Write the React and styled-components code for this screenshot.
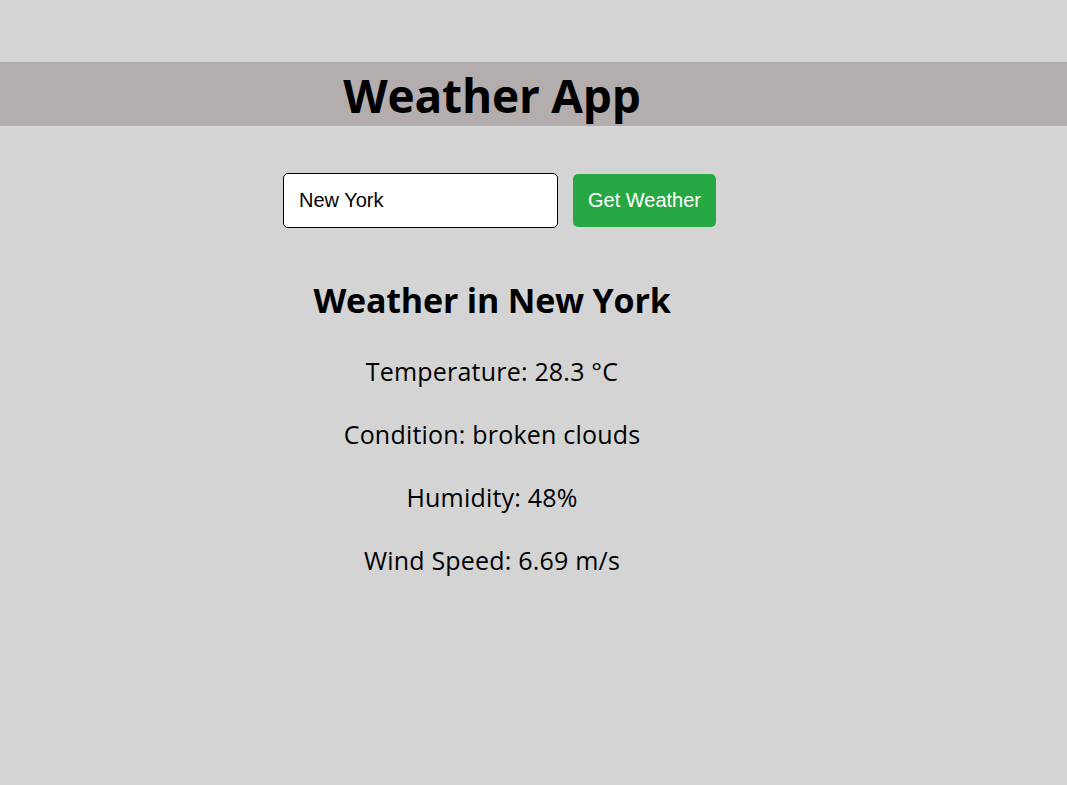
import React, { useState } from 'react';
import styled, { createGlobalStyle } from 'styled-components';

const GlobalStyle = createGlobalStyle`
  html, body {
    margin: 0;
    padding: 0;
    background: #d4d4d4;
    font-family: "Open Sans", "Noto Sans", sans-serif;
    color: #000;
  }
`;

const Page = styled.div`
  padding-top: 62px;
  min-height: 723px;
`;

const Header = styled.header`
  background: #b3aead;
  height: 64px;
`;

const Column = styled.div`
  width: 984px;
  text-align: center;
`;

const Title = styled.h1`
  margin: 0;
  padding-top: 3px;
  font-size: 46px;
  font-weight: 700;
  line-height: 61px;
  letter-spacing: -0.2px;
`;

const SearchRow = styled.form`
  display: flex;
  justify-content: center;
  align-items: center;
  gap: 15px;
  margin-top: 47px;
  padding-left: 15px;
`;

const CityInput = styled.input`
  box-sizing: border-box;
  width: 275px;
  height: 55px;
  padding: 0 15px;
  border: 1px solid #000;
  border-radius: 5px;
  background: #fff;
  font-family: "Liberation Sans", Arial, sans-serif;
  font-size: 20px;
  color: #000;
  outline: none;
`;

const SubmitButton = styled.button`
  box-sizing: border-box;
  width: 143px;
  height: 53px;
  border: none;
  border-radius: 5px;
  background: #28a745;
  color: #fff;
  font-family: "Liberation Sans", Arial, sans-serif;
  font-size: 20px;
  cursor: pointer;
`;

const Result = styled.section`
  margin-top: 48px;
`;

const CityHeading = styled.h2`
  margin: 0 0 29px;
  font-size: 34px;
  font-weight: 700;
  line-height: 48px;
  letter-spacing: -0.2px;
`;

const Stat = styled.p`
  margin: 0 0 27px;
  font-size: 25px;
  line-height: 36px;
  letter-spacing: 0.2px;
`;

const weather = {
  city: 'New York',
  temp: 28.3,
  condition: 'broken clouds',
  humidity: 48,
  wind: 6.69,
};

export default function App() {
  const [city, setCity] = useState('New York');

  return (
    <>
      <GlobalStyle />
      <Page>
        <Header>
          <Column>
            <Title>Weather App</Title>
          </Column>
        </Header>
        <Column>
          <SearchRow onSubmit={e => e.preventDefault()}>
            <CityInput value={city} onChange={e => setCity(e.target.value)} />
            <SubmitButton type="submit">Get Weather</SubmitButton>
          </SearchRow>
          <Result>
            <CityHeading>Weather in {weather.city}</CityHeading>
            <Stat>Temperature: {weather.temp} °C</Stat>
            <Stat>Condition: {weather.condition}</Stat>
            <Stat>Humidity: {weather.humidity}%</Stat>
            <Stat>Wind Speed: {weather.wind} m/s</Stat>
          </Result>
        </Column>
      </Page>
    </>
  );
}
